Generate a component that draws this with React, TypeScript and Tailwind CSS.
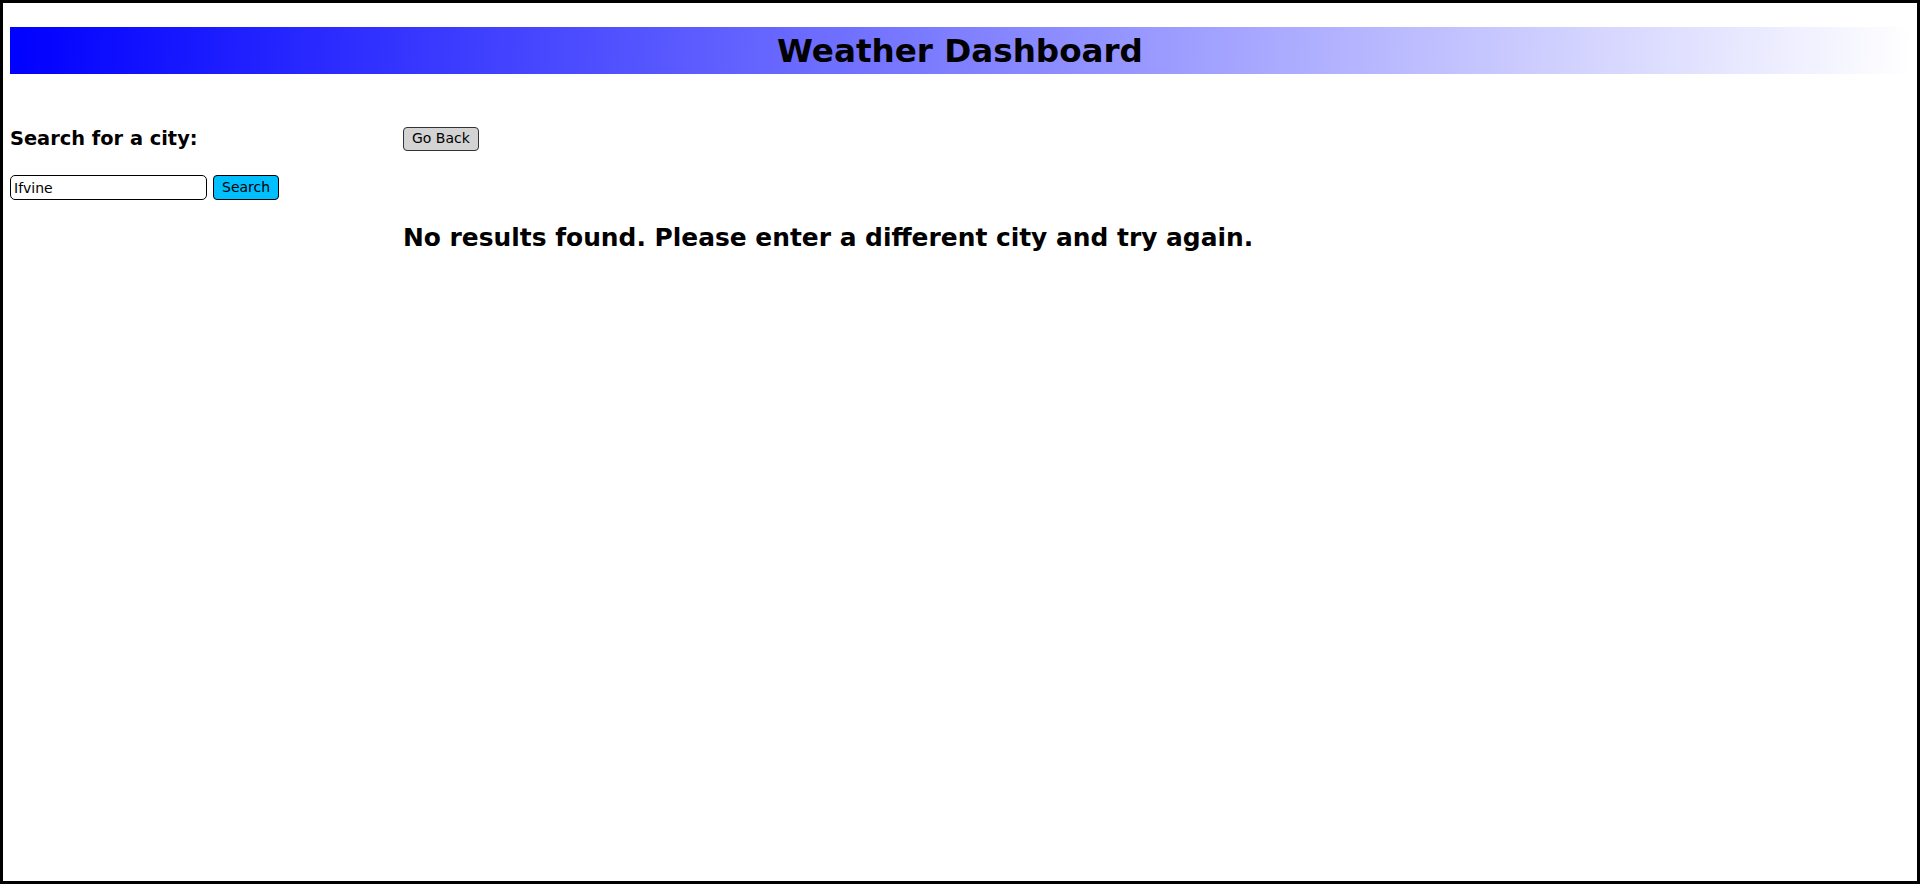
export default function App() {
  return (
    <div className="h-screen w-full border-[3px] border-black px-[7px] font-['DejaVu_Sans',sans-serif] text-black">
      <h1 className="mt-[24px] h-[47px] bg-[linear-gradient(93deg,#0000ff,#ffffff)] text-center text-[32.6px] font-bold leading-[48px]">
        Weather Dashboard
      </h1>
      <div className="mt-[49px] flex">
        <div className="w-[393px] shrink-0">
          <h3 className="pt-[4px] text-[19.4px] font-bold leading-[24px]">Search for a city:</h3>
          <div className="mt-[24px] flex items-center gap-[6px]">
            <input
              defaultValue="Ifvine"
              className="h-[25px] w-[197px] rounded-[5px] border border-black px-[3px] text-[14px] outline-none"
            />
            <button className="h-[25px] rounded-[4px] border border-black bg-[#00bfff] px-[8px] text-[14px]">
              Search
            </button>
          </div>
        </div>
        <div className="pt-[3px]">
          <button className="h-[24px] rounded-[4px] border border-[#333] bg-[#d3d3d3] px-[8px] text-[14px]">
            Go Back
          </button>
          <h2 className="mt-[72px] text-[24.9px] font-bold leading-[30px]">
            No results found. Please enter a different city and try again.
          </h2>
        </div>
      </div>
    </div>
  );
}
